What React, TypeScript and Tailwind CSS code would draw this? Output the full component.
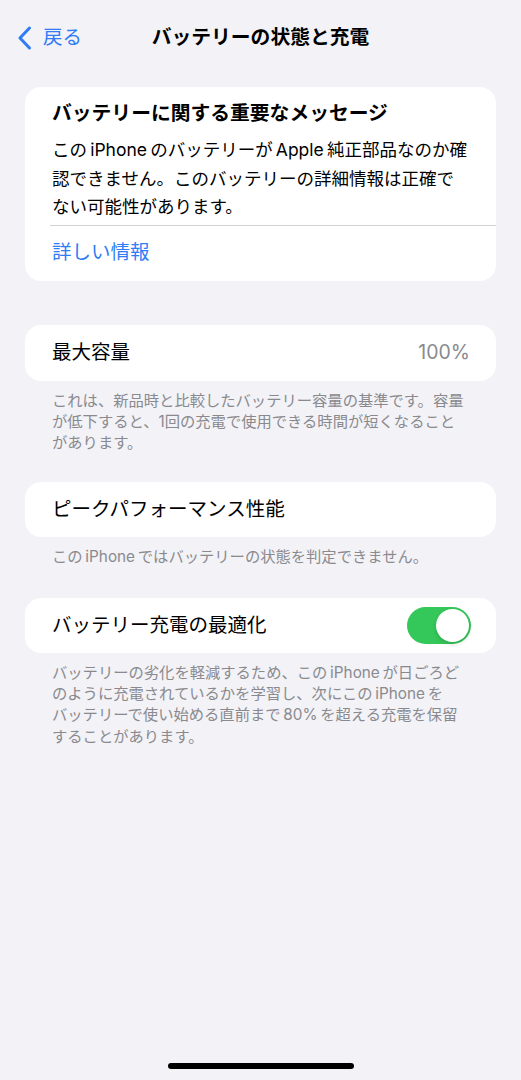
const font = {
  fontFamily: '"Inter", "Noto Sans CJK JP", sans-serif',
};

function BackChevron() {
  return (
    <svg width="16" height="24" viewBox="0 0 16 24" fill="none">
      <path
        d="M12.5 2 L3 12 L12.5 22"
        stroke="#2f7cf6"
        strokeWidth="3"
        strokeLinecap="round"
        strokeLinejoin="round"
      />
    </svg>
  );
}

function Toggle() {
  return (
    <div className="flex h-[37px] w-[64px] items-center justify-end rounded-full bg-[#34c759] px-[2px]">
      <div className="h-[33px] w-[33px] rounded-full bg-white shadow-[0_2px_4px_rgba(0,0,0,0.15)]" />
    </div>
  );
}

// each string is one rendered line, as the settings screen breaks them
function Lines({ lines }: { lines: string[] }) {
  return (
    <>
      {lines.map((l) => (
        <span key={l} className="block whitespace-nowrap">
          {l}
        </span>
      ))}
    </>
  );
}

function Footnote({ lines }: { lines: string[] }) {
  return (
    <p className="mt-[9px] px-[27px] text-[15.3px] leading-[21.3px] text-[#8a8a8e]">
      <Lines lines={lines} />
    </p>
  );
}

export default function App() {
  return (
    <div
      className="flex min-h-[1080px] w-[521px] flex-col bg-[#f2f2f7] text-black"
      style={font}
    >
      {/* navigation bar */}
      <header className="relative flex h-[76px] items-center">
        <div className="flex items-center gap-[10px] pl-[17px]">
          <BackChevron />
          <span className="text-[19.5px] text-[#2f7cf6]">戻る</span>
        </div>
        <h1 className="absolute left-1/2 -translate-x-1/2 whitespace-nowrap text-[19.8px] font-bold">
          バッテリーの状態と充電
        </h1>
      </header>

      <main className="px-[25px] pt-[11px]">
        {/* warning card */}
        <section className="rounded-[16px] bg-white">
          <div className="px-[27px] pt-[12px]">
            <h2 className="text-[19.8px] font-bold leading-[28px]">
              バッテリーに関する重要なメッセージ
            </h2>
            <p className="mt-[9px] text-[17.5px] leading-[28.5px]">
              <Lines
                lines={[
                  "この\u2009iPhone\u2009のバッテリーが\u2009Apple\u2009純正部品なのか確",
                  "認できません。このバッテリーの詳細情報は正確で",
                  "ない可能性があります。",
                ]}
              />
            </p>
          </div>
          <div className="ml-[25px] mt-[3px] h-px bg-[#d1d1d6]" />
          <div className="flex h-[55px] items-center px-[27px] text-[19.5px] text-[#2f7cf6]">
            詳しい情報
          </div>
        </section>

        {/* maximum capacity */}
        <section className="mt-[44px] flex h-[56px] items-center justify-between rounded-[16px] bg-white pl-[27px] pr-[26px] text-[19.5px]">
          <span>最大容量</span>
          <span className="text-[#8a8a8e]">100%</span>
        </section>
        <Footnote
          lines={[
            "これは、新品時と比較したバッテリー容量の基準です。容量",
            "が低下すると、1回の充電で使用できる時間が短くなること",
            "があります。",
          ]}
        />

        {/* peak performance */}
        <section className="mt-[29px] flex h-[55px] items-center rounded-[16px] bg-white px-[27px] text-[19.5px]">
          ピークパフォーマンス性能
        </section>
        <Footnote
          lines={["この\u2009iPhone\u2009ではバッテリーの状態を判定できません。"]}
        />

        {/* optimized charging */}
        <section className="mt-[30px] flex h-[55px] items-center justify-between rounded-[16px] bg-white pl-[27px] pr-[25px] text-[19.5px]">
          <span>バッテリー充電の最適化</span>
          <Toggle />
        </section>
        <Footnote
          lines={[
            "バッテリーの劣化を軽減するため、この\u2009iPhone\u2009が日ごろど",
            "のように充電されているかを学習し、次にこの\u2009iPhone\u2009を",
            "バッテリーで使い始める直前まで\u200980%\u2009を超える充電を保留",
            "することがあります。",
          ]}
        />
      </main>

      {/* home indicator */}
      <div className="mb-[11px] mt-auto flex justify-center">
        <div className="h-[6px] w-[186px] rounded-full bg-black" />
      </div>
    </div>
  );
}
